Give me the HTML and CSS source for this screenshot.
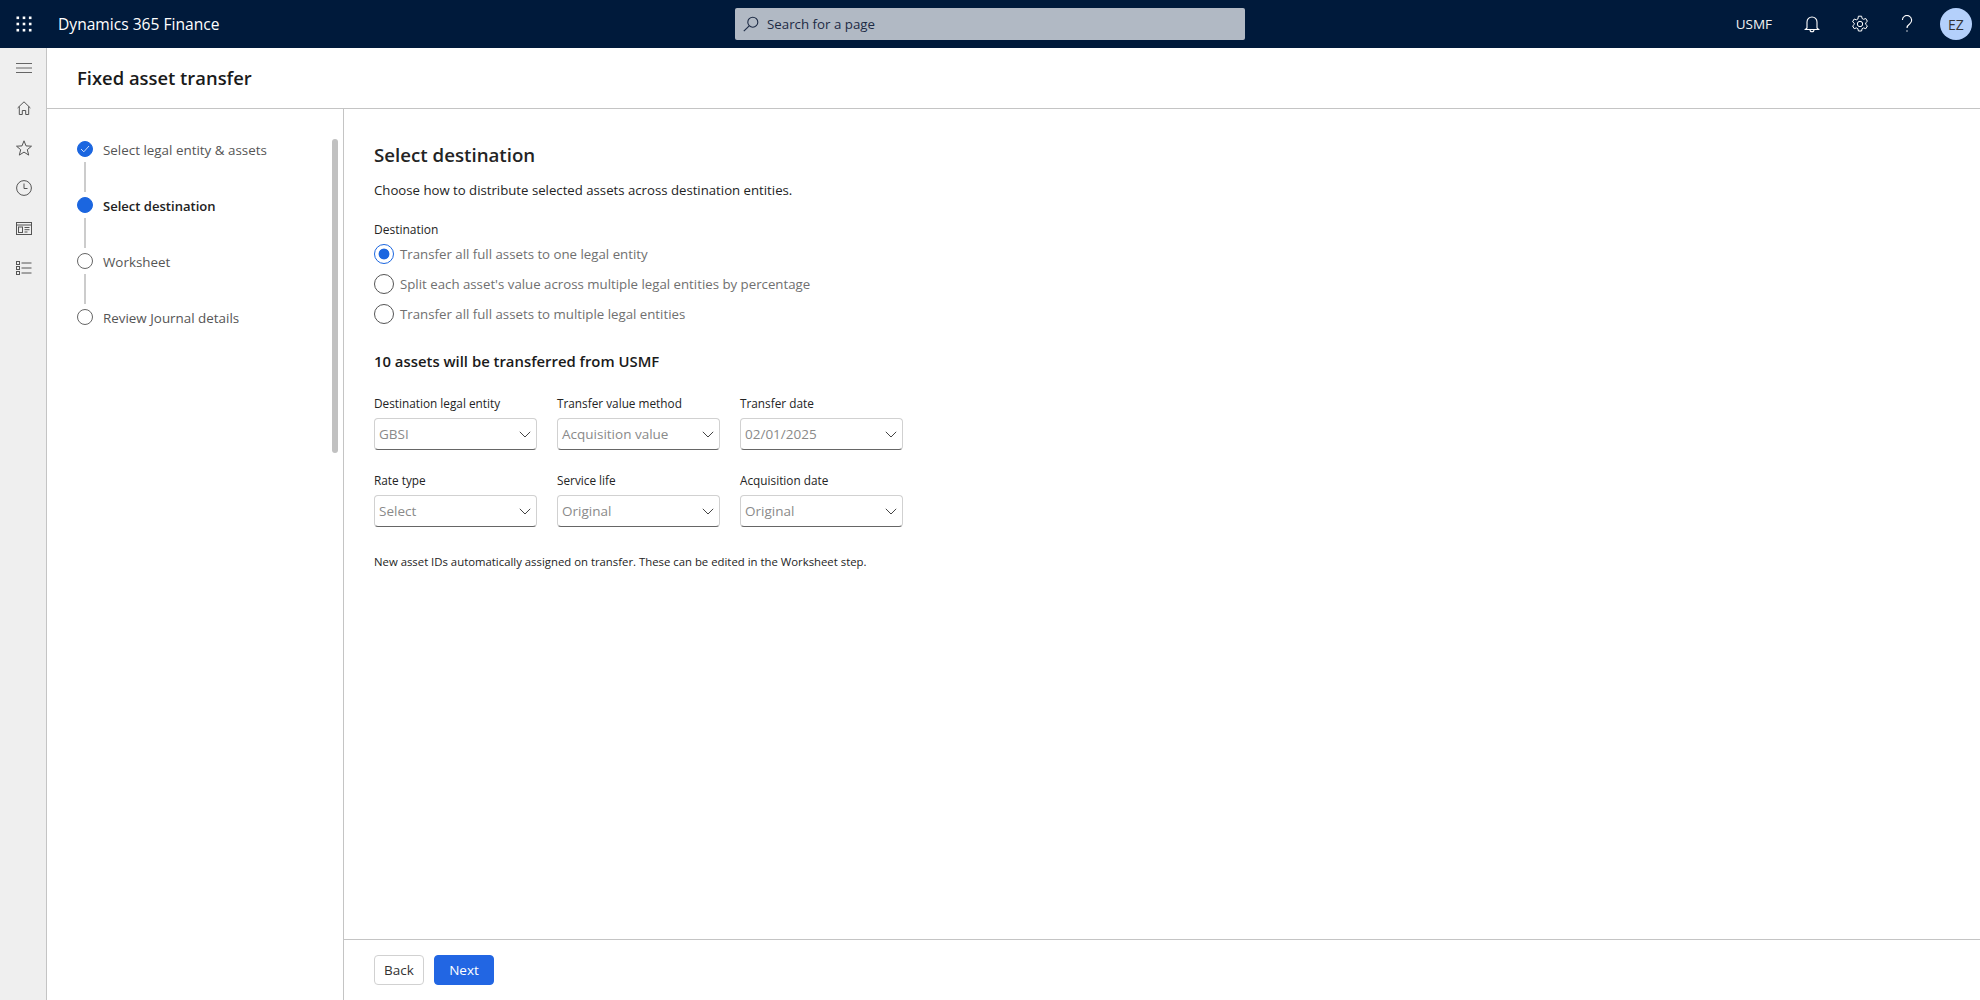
FILE: index.html
```html
<!DOCTYPE html>
<html lang="en">
<head>
<meta charset="utf-8">
<title>Fixed asset transfer</title>
<link rel="stylesheet" href="styles.css">
</head>
<body>
<header class="topbar">
  <div class="brand">
    <svg class="waffle" width="16" height="16" viewBox="0 0 16 16" fill="#fff"><rect x="0.5" y="0.5" width="2.6" height="2.6"/><rect x="6.7" y="0.5" width="2.6" height="2.6"/><rect x="12.9" y="0.5" width="2.6" height="2.6"/><rect x="0.5" y="6.7" width="2.6" height="2.6"/><rect x="6.7" y="6.7" width="2.6" height="2.6"/><rect x="12.9" y="6.7" width="2.6" height="2.6"/><rect x="0.5" y="12.9" width="2.6" height="2.6"/><rect x="6.7" y="12.9" width="2.6" height="2.6"/><rect x="12.9" y="12.9" width="2.6" height="2.6"/></svg>
    <span class="app-name">Dynamics 365 Finance</span>
  </div>
  <div class="search">
    <svg width="16" height="16" viewBox="0 0 16 16" fill="none" stroke="#1d2b45" stroke-width="1.1"><circle cx="9.8" cy="6.2" r="5"/><path d="M6.2 9.8L0.8 15.2"/></svg>
    <span>Search for a page</span>
  </div>
  <div class="top-right">
    <span class="company">USMF</span>
    <svg class="top-icon bell" width="16" height="18" viewBox="0 0 16 18" fill="none" stroke="#fff" stroke-width="1.1"><path d="M3 13V7a5 5 0 0 1 10 0v6l1.6 1.5H1.4z"/><path d="M6 14.8a2 2 0 0 0 4 0"/></svg>
    <svg class="top-icon gear" width="18" height="18" viewBox="0 0 18 18" fill="none" stroke="#fff" stroke-width="1"><path d="M7.4 1.2h3.2l.5 2.3 1.5.8 2.2-.8 1.6 2.8-1.7 1.5v1.6l1.7 1.5-1.6 2.8-2.2-.8-1.5.8-.5 2.3H7.4l-.5-2.3-1.5-.8-2.2.8-1.6-2.8 1.7-1.5V8.3L1.6 6.8l1.6-2.8 2.2.8 1.5-.8z"/><circle cx="9" cy="9" r="2.7"/></svg>
    <svg class="top-icon help" width="12" height="18" viewBox="0 0 12 18" fill="none" stroke="#fff" stroke-width="1.1"><path d="M1.4 5a4.6 4.6 0 1 1 7.4 3.7C7 10 6 10.800 6 13"/><circle cx="6" cy="16" r=".7" fill="#fff" stroke="none"/></svg>
    <div class="avatar">EZ</div>
  </div>
</header>
<div class="shell">
  <nav class="rail">
    <svg class="rail-icon" width="16" height="10" viewBox="0 0 16 10" stroke="#666" stroke-width="1"><path d="M0 .5h16M0 5h16M0 9.500h16"/></svg>
    <svg class="rail-icon" width="14" height="14" viewBox="0 0 14 14" fill="none" stroke="#555" stroke-width="1"><path d="M.6 7L7 .8 13.400 7M2.300 5.500v8h3v-4h3.400v4h3v-8"/></svg>
    <svg class="rail-icon" width="16" height="16" viewBox="0 0 16 16" fill="none" stroke="#555" stroke-width="1"><path d="M8 .8l2 5.100 5.500.3-4.200 3.500 1.400 5.400L8 12.100l-4.700 3 1.400-5.400L.5 6.200 6 5.900z"/></svg>
    <svg class="rail-icon" width="16" height="16" viewBox="0 0 16 16" fill="none" stroke="#555" stroke-width="1"><circle cx="8" cy="8" r="7.400"/><path d="M8 3.500V8.500h3.500"/></svg>
    <svg class="rail-icon" width="16" height="13" viewBox="0 0 16 13" fill="none" stroke="#555" stroke-width="1"><rect x=".5" y=".5" width="15" height="12"/><path d="M.5 3h15"/><rect x="2.500" y="5" width="4" height="5.500"/><path d="M8.500 5.500h5M8.500 7.700h5M8.500 10h3"/></svg>
    <svg class="rail-icon" width="16" height="14" viewBox="0 0 16 14" fill="none" stroke="#555" stroke-width="1"><rect x=".5" y=".5" width="3" height="3"/><rect x=".5" y="5.500" width="3" height="3"/><rect x=".5" y="10.500" width="3" height="3"/><path d="M5.500 2h10M5.500 7h10M5.500 12h10"/></svg>
  </nav>
  <main class="page">
    <div class="page-head"><h1>Fixed asset transfer</h1></div>
    <div class="page-body">
      <aside class="wizard">
        <ol class="steps">
          <li class="step done">
            <span class="dot"><svg width="10" height="8" viewBox="0 0 10 8" fill="none" stroke="#cfe0fb" stroke-width="1"><path d="M1 4l2.800 2.800L9 1"/></svg></span>
            <span class="step-label">Select legal entity &amp; assets</span>
          </li>
          <li class="step current"><span class="dot"></span><span class="step-label">Select destination</span></li>
          <li class="step"><span class="dot"></span><span class="step-label">Worksheet</span></li>
          <li class="step last"><span class="dot"></span><span class="step-label">Review Journal details</span></li>
        </ol>
        <div class="scrollbar"></div>
      </aside>
      <section class="content">
        <div class="form">
          <h2>Select destination</h2>
          <p class="intro">Choose how to distribute selected assets across destination entities.</p>
          <div class="group-label">Destination</div>
          <div class="radios">
            <div class="radio on"><span class="ring"></span><span>Transfer all full assets to one legal entity</span></div>
            <div class="radio"><span class="ring"></span><span>Split each asset's value across multiple legal entities by percentage</span></div>
            <div class="radio"><span class="ring"></span><span>Transfer all full assets to multiple legal entities</span></div>
          </div>
          <h3>10 assets will be transferred from USMF</h3>
          <div class="fields">
            <div class="field"><label>Destination legal entity</label><div class="select"><span>GBSI</span><svg width="12" height="7" viewBox="0 0 12 7" fill="none" stroke="#444" stroke-width="1"><path d="M.8.800L6 6l5.200-5.200"/></svg></div></div>
            <div class="field"><label>Transfer value method</label><div class="select"><span>Acquisition value</span><svg width="12" height="7" viewBox="0 0 12 7" fill="none" stroke="#444" stroke-width="1"><path d="M.8.800L6 6l5.200-5.200"/></svg></div></div>
            <div class="field"><label>Transfer date</label><div class="select"><span>02/01/2025</span><svg width="12" height="7" viewBox="0 0 12 7" fill="none" stroke="#444" stroke-width="1"><path d="M.8.800L6 6l5.200-5.200"/></svg></div></div>
            <div class="field"><label>Rate type</label><div class="select"><span>Select</span><svg width="12" height="7" viewBox="0 0 12 7" fill="none" stroke="#444" stroke-width="1"><path d="M.8.800L6 6l5.200-5.200"/></svg></div></div>
            <div class="field"><label>Service life</label><div class="select"><span>Original</span><svg width="12" height="7" viewBox="0 0 12 7" fill="none" stroke="#444" stroke-width="1"><path d="M.8.800L6 6l5.200-5.200"/></svg></div></div>
            <div class="field"><label>Acquisition date</label><div class="select"><span>Original</span><svg width="12" height="7" viewBox="0 0 12 7" fill="none" stroke="#444" stroke-width="1"><path d="M.8.800L6 6l5.200-5.200"/></svg></div></div>
          </div>
          <p class="note">New asset IDs automatically assigned on transfer. These can be edited in the Worksheet step.</p>
        </div>
        <footer class="actions">
          <button class="btn">Back</button>
          <button class="btn primary">Next</button>
        </footer>
      </section>
    </div>
  </main>
</div>
</body>
</html>
```
FILE: styles.css
```css
* { box-sizing: border-box; }
html, body { margin: 0; height: 100%; }
body {
  font-family: "Open Sans", "Noto Sans", "Liberation Sans", sans-serif;
  color: #242424;
  background: #fff;
  height: 1000px;
  overflow: hidden;
  display: flex;
  flex-direction: column;
}
.topbar {
  height: 48px;
  flex: none;
  background: #001a3b;
  color: #fff;
  display: grid;
  grid-template-columns: 735px 510px 1fr;
  align-items: center;
}
.brand { display: flex; align-items: center; padding-left: 16px; }
.waffle { margin-right: 26px; }
.app-name { font-size: 15.600px; }
.search {
  height: 32px;
  background: #b1b9c4;
  border-radius: 2px;
  display: flex;
  align-items: center;
  gap: 8px;
  padding-left: 8px;
  font-size: 13.300px;
  color: #1d2b45;
}
.top-right {
  display: flex;
  align-items: center;
  justify-content: flex-end;
  padding-right: 8px;
}
.company { font-size: 13.500px; margin-right: 32px; color: #f2f2f2; }
.bell { margin-right: 31px; }
.gear { margin-right: 32px; }
.help { margin-right: 27px; }
.avatar {
  width: 32px;
  height: 32px;
  border-radius: 50%;
  background: #b4d0fb;
  color: #333;
  font-size: 14px;
  display: flex;
  align-items: center;
  justify-content: center;
}
.shell { flex: 1; display: flex; min-height: 0; }
.rail {
  width: 47px;
  flex: none;
  background: #efefef;
  border-right: 1px solid #c4c4c4;
  display: grid;
  grid-auto-rows: 40px;
  justify-items: center;
  align-items: center;
  align-content: start;
  padding-left: 2px;
}
.rail-icon { display: block; }
.page { flex: 1; display: flex; flex-direction: column; min-width: 0; }
.page-head {
  height: 61px;
  flex: none;
  border-bottom: 1px solid #c4c4c4;
  padding: 1px 0 0 30px;
  display: flex;
  align-items: center;
}
h1 { margin: 0; font-size: 18.400px; font-weight: 600; color: #1a1a1a; line-height: 1; }
.page-body { flex: 1; display: flex; min-height: 0; }
.wizard {
  width: 297px;
  flex: none;
  border-right: 1px solid #c4c4c4;
  position: relative;
  padding: 32px 0 0 30px;
}
.steps { list-style: none; margin: 0; padding: 0; }
.step {
  height: 56px;
  display: flex;
  align-items: flex-start;
  gap: 10px;
  font-size: 13.400px;
  color: #555;
  position: relative;
}
.step::after {
  content: "";
  position: absolute;
  left: 7px;
  top: 21px;
  width: 2px;
  height: 30px;
  background: #ccc;
}
.step.last::after { display: none; }
.dot {
  width: 16px;
  height: 16px;
  border-radius: 50%;
  border: 1px solid #666;
  flex: none;
  display: flex;
  align-items: center;
  justify-content: center;
  background: #fff;
}
.done .dot, .current .dot { background: #1b66e0; border-color: #1b66e0; }
.step-label { line-height: 18px; }
.current .step-label { color: #222; font-weight: 600; font-size: 13.060px; }
.scrollbar {
  position: absolute;
  right: 5px;
  top: 30px;
  width: 6px;
  height: 314px;
  background: #c1c1c1;
  border-radius: 3px;
}
.content { flex: 1; display: flex; flex-direction: column; min-width: 0; }
.form { flex: 1; padding: 34px 30px 0; }
h2 { margin: 0; font-size: 18.700px; font-weight: 600; line-height: 24px; color: #242424; }
.intro { margin: 14px 0 0; font-size: 13.200px; line-height: 18px; }
.group-label { margin-top: 23px; font-size: 12px; line-height: 16px; font-weight: 500; }
.radios { display: flex; flex-direction: column; gap: 10px; margin-top: 6px; }
.radio {
  height: 20px;
  display: flex;
  align-items: center;
  gap: 6px;
  font-size: 13.250px;
  color: #707070;
}
.ring {
  width: 20px;
  height: 20px;
  border-radius: 50%;
  border: 1px solid #555;
  flex: none;
  background: #fff;
}
.radio.on .ring {
  border-color: #1b66e0;
  background: radial-gradient(circle, #1b66e0 0 5px, #fff 5.800px);
}
h3 { margin: 27px 0 0; font-size: 14.870px; font-weight: 600; line-height: 20px; color: #1a1a1a; }
.fields {
  display: grid;
  grid-template-columns: repeat(3, 163px);
  column-gap: 20px;
  row-gap: 22px;
  margin-top: 24px;
}
.field label { display: block; font-size: 11.800px; line-height: 16px; font-weight: 500; margin-bottom: 7px; }
.select {
  height: 32px;
  border: 1px solid #d1d1d1;
  border-bottom: 1px solid #666;
  border-radius: 4px;
  display: flex;
  align-items: center;
  justify-content: space-between;
  padding: 0 5px 0 4px;
  font-size: 13.500px;
  color: #8a8a8a;
}
.note { margin: 27px 0 0; font-size: 11.350px; line-height: 16px; }
.actions {
  height: 61px;
  flex: none;
  border-top: 1px solid #c4c4c4;
  padding: 15px 30px 0;
  display: flex;
  align-items: flex-start;
  gap: 10px;
}
.btn {
  font-family: inherit;
  height: 30px;
  width: 50px;
  border: 1px solid #d1d1d1;
  border-radius: 4px;
  background: #fff;
  color: #333;
  font-size: 13.500px;
  font-weight: 500;
  padding: 0;
}
.btn.primary { width: 60px; background: #2266e3; border-color: #2266e3; color: #fff; }
```
